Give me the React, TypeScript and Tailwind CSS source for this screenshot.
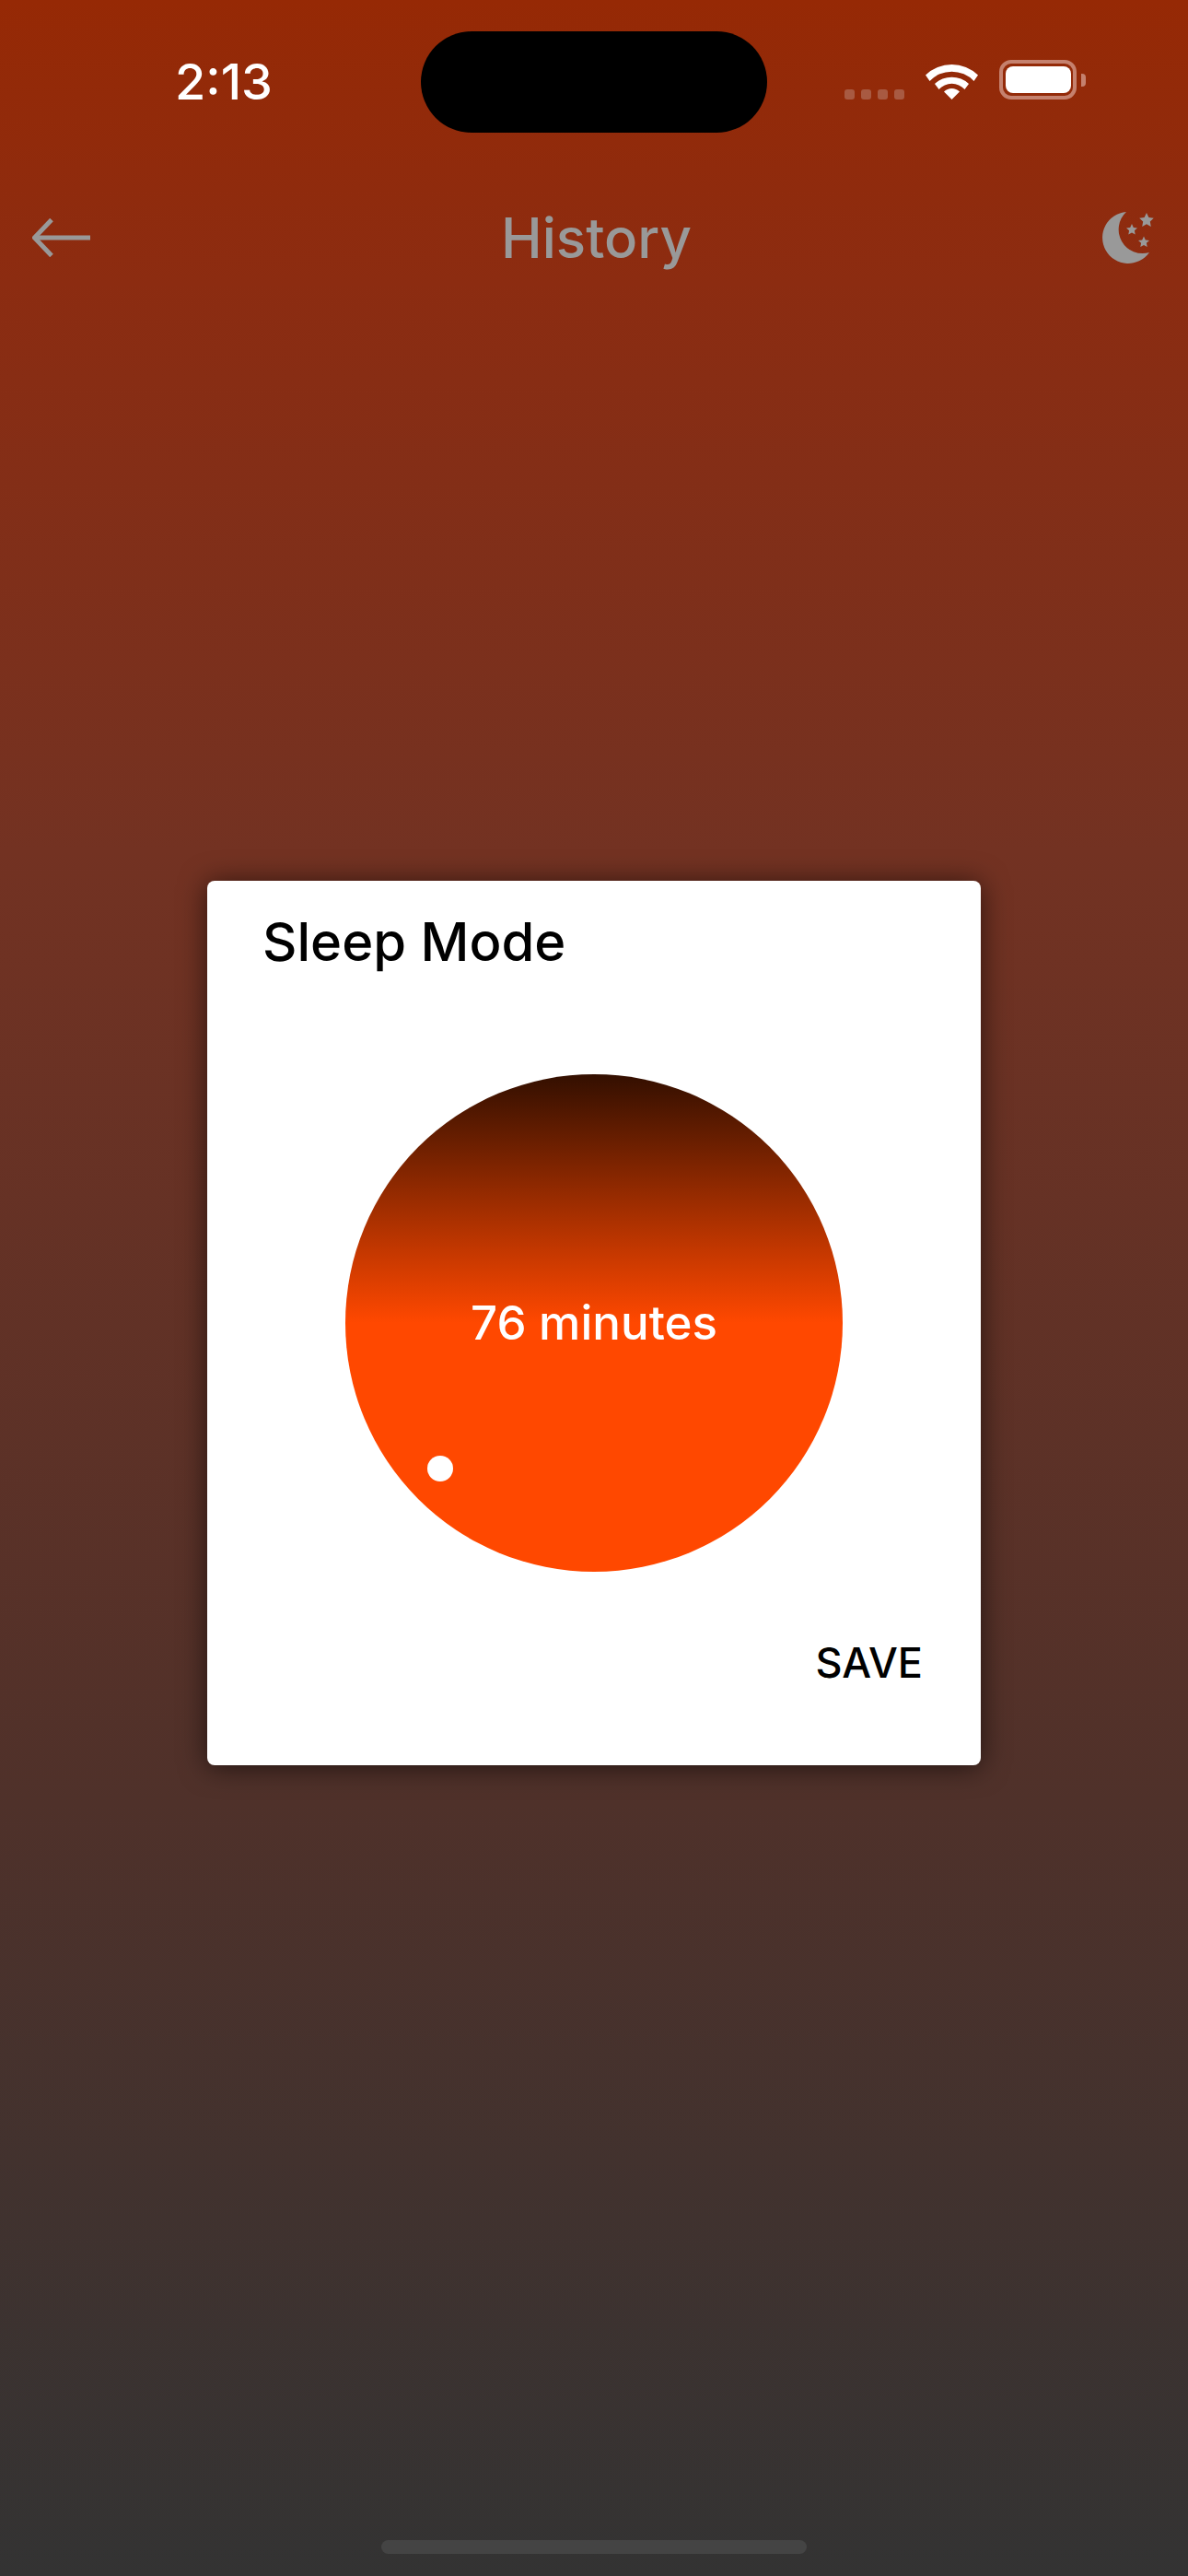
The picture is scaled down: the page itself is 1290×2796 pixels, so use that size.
export default function App() {
  return (
    <div className="flex h-[2796px] w-[1290px] flex-col overflow-hidden bg-[linear-gradient(180deg,#962905_0%,#8c2c11_11%,#733222_33%,#4f312a_70%,#333333_100%)] font-['Inter',sans-serif]">
      {/* status bar */}
      <div className="flex h-[200px] items-start pt-[34px]">
        <div className="w-[457px] pl-[190px] pt-[22px] text-[54px] leading-[66px] font-medium text-white">2:13</div>
        <div className="h-[110px] w-[376px] rounded-[55px] bg-black" />
        <div className="ml-[84px] flex items-end pt-[31px]">
          <div className="flex gap-[7px]">
            <span className="h-[11px] w-[11px] rounded-[3px] bg-[#a85a42]" />
            <span className="h-[11px] w-[11px] rounded-[3px] bg-[#a85a42]" />
            <span className="h-[11px] w-[11px] rounded-[3px] bg-[#a85a42]" />
            <span className="h-[11px] w-[11px] rounded-[3px] bg-[#a85a42]" />
          </div>
          <svg className="ml-[23px]" width="57" height="42" viewBox="0 0 57 42" fill="#fff">
            <path d="M0 15.500 A41 41 0 0 1 57 15.500 L52.500 22 A33 33 0 0 0 4.500 22 Z" />
            <path d="M10 25 A27 27 0 0 1 47 25 L42.500 31 A19 19 0 0 0 14.500 31 Z" />
            <path d="M20 33.500 A12 12 0 0 1 37 33.500 L28.500 42 Z" />
          </svg>
          <div className="ml-[23px] flex items-center">
            <div className="flex h-[43px] w-[84px] items-center justify-center rounded-[13px] border-[4px] border-[#c5816e]">
              <div className="h-[29px] w-[71px] rounded-[8px] bg-white" />
            </div>
            <div className="ml-[5px] h-[14px] w-[5px] rounded-r-[4px] bg-[#c5816e]" />
          </div>
        </div>
      </div>

      {/* nav bar */}
      <div className="flex h-[116px] items-center justify-between pl-[35px] pr-[37px]">
        <svg width="63" height="42" viewBox="0 0 63 42" fill="none" stroke="#999999" strokeWidth="5">
          <path d="M63 21H3" />
          <path d="M21 1.500L2.500 21L21 40.500" />
        </svg>
        <div className="text-[60px] leading-[72px] font-medium text-[#999999]">History</div>
        <svg width="56" height="56" viewBox="0 0 56 56" fill="#999999">
          <path d="M26 0A28 28 0 1 0 51 44A26 26 0 0 1 26 0Z" />
          <path d="M48 1l2.400 5 5.400.7-4 3.800 1 5.400-4.800-2.700-4.800 2.700 1-5.400-4-3.800 5.400-.7z" />
          <path d="M32 13l1.800 3.900 4.200.5-3.100 2.900.8 4.200-3.700-2.100-3.700 2.100.8-4.200-3.100-2.900 4.200-.5z" />
          <path d="M45 26.500l1.800 3.900 4.200.5-3.100 2.900.8 4.200-3.700-2.100-3.700 2.100.8-4.200-3.100-2.900 4.200-.5z" />
        </svg>
      </div>

      {/* dialog */}
      <div className="mx-auto mt-[640px] flex h-[960px] w-[840px] flex-col rounded-[8px] bg-white pt-[30px] shadow-[0_2px_30px_rgba(0,0,0,0.6)]">
        <div className="pl-[60px] text-[58px] leading-[72px] font-medium text-black">Sleep Mode</div>
        <div className="relative mx-auto mt-[108px] flex h-[540px] w-[540px] items-center justify-center rounded-full bg-[linear-gradient(180deg,#330f00_0%,#ff4800_50%,#ff4800_100%)]">
          <span className="text-[51px] leading-[60px] font-medium text-white">76 minutes</span>
          <span className="absolute left-[89px] top-[414px] h-[28px] w-[28px] rounded-full bg-white" />
        </div>
        <div className="mt-[69px] pr-[63px] text-right text-[45px] leading-[60px] font-medium text-black">SAVE</div>
      </div>

      {/* home indicator */}
      <div className="mx-auto mb-[24px] mt-auto h-[15px] w-[462px] rounded-full bg-[#444444]" />
    </div>
  )
}
